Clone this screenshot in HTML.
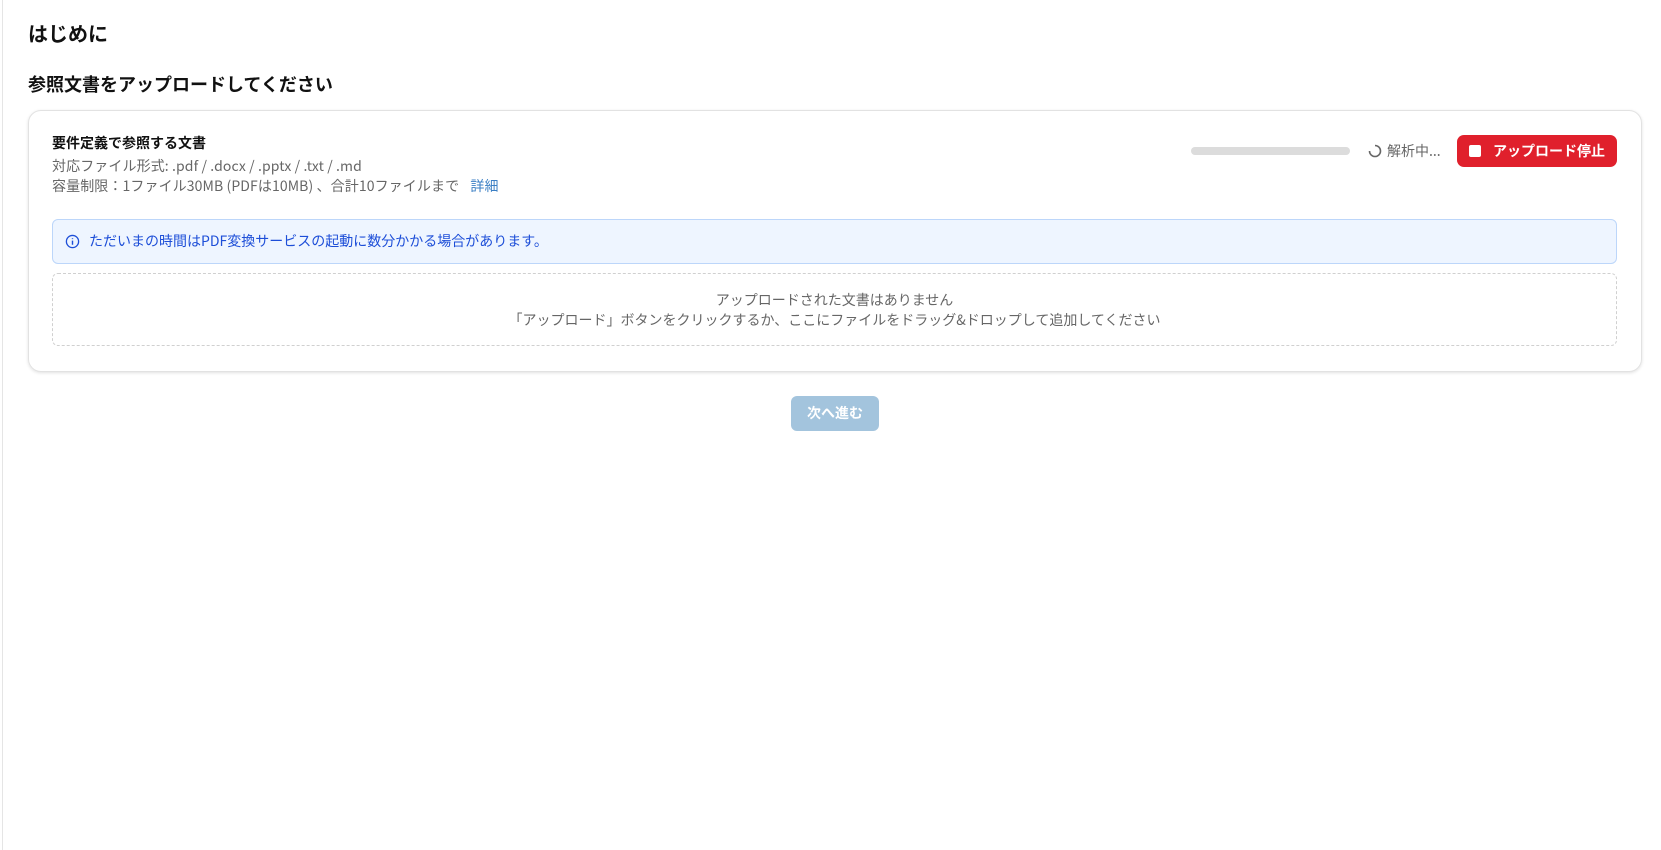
<!DOCTYPE html>
<html><head><meta charset="utf-8"><style>
*{box-sizing:border-box;margin:0;padding:0}
body{width:1661px;height:850px;background:#fff;font-family:"Noto Sans CJK JP","Liberation Sans",sans-serif;position:relative;overflow:hidden;color:#111}
.vl{position:absolute;left:2px;top:0;width:1px;height:850px;background:#e5e5e5}
.a{position:absolute;white-space:nowrap}
.card{position:absolute;left:28px;top:110px;width:1614px;height:262px;border:1px solid #e2e2e2;border-radius:13px;box-shadow:0 1px 3px rgba(0,0,0,.12)}
</style></head><body>
<div class="vl"></div>
<div class="a" style="left:28px;top:18px;font-size:20px;font-weight:bold">はじめに</div>
<div class="a" style="left:28px;top:71px;font-size:18px;font-weight:bold">参照文書をアップロードしてください</div>
<div class="card"></div>
<div class="a" style="left:52px;top:133px;font-size:14px;font-weight:bold">要件定義で参照する文書</div>
<div class="a" style="left:52px;top:156px;font-size:14px;color:#666;letter-spacing:0.1px">対応ファイル形式: .pdf / .docx / .pptx / .txt / .md</div>
<div class="a" style="left:52px;top:176px;font-size:14px;color:#666;letter-spacing:0.1px">容量制限：1ファイル30MB (PDFは10MB) 、合計10ファイルまで <span style="color:#3b7fc4;margin-left:8px">詳細</span></div>
<div class="a" style="left:1191px;top:147px;width:159px;height:8px;background:#dcdcdc;border-radius:4px"></div>
<svg class="a" style="left:1368px;top:144px" width="14" height="14" viewBox="0 0 14 14"><path d="M7 1.5A5.5 5.5 0 1 1 1.5 7" fill="none" stroke="#666" stroke-width="1.6"/></svg>
<div class="a" style="left:1387px;top:141px;font-size:14px;color:#666">解析中...</div>
<div class="a" style="left:1457px;top:135px;width:160px;height:32px;background:#e0202c;border-radius:7px;color:#fff;font-size:14px;font-weight:bold;line-height:32px;padding-left:12px"><span style="display:inline-block;width:12px;height:12px;background:#fff;border-radius:2px;vertical-align:-1px;margin-right:12px"></span>アップロード停止</div>
<div class="a" style="left:52px;top:219px;width:1565px;height:45px;background:#eef5ff;border:1px solid #bcd6fa;border-radius:6px"></div>
<svg class="a" style="left:65px;top:234px" width="15" height="15" viewBox="0 0 16 16"><circle cx="8" cy="8" r="6.5" fill="none" stroke="#1d4ed8" stroke-width="1.4"/><path d="M8 7v4.5M8 4.5v1" stroke="#1d4ed8" stroke-width="1.5"/></svg>
<div class="a" style="left:89px;top:231px;font-size:14px;color:#1d4ed8">ただいまの時間はPDF変換サービスの起動に数分かかる場合があります。</div>
<div class="a" style="left:52px;top:273px;width:1565px;height:73px;border:1px dashed #d0d0d0;border-radius:6px"></div>
<div class="a" style="left:52px;top:290px;width:1565px;text-align:center;font-size:14px;color:#666;line-height:20px">アップロードされた文書はありません<br>「アップロード」ボタンをクリックするか、ここにファイルをドラッグ&amp;ドロップして追加してください</div>
<div class="a" style="left:791px;top:396px;width:88px;height:35px;background:#a3c4dd;border-radius:6px;color:#fff;font-size:14px;font-weight:bold;text-align:center;line-height:35px">次へ進む</div>
</body></html>
